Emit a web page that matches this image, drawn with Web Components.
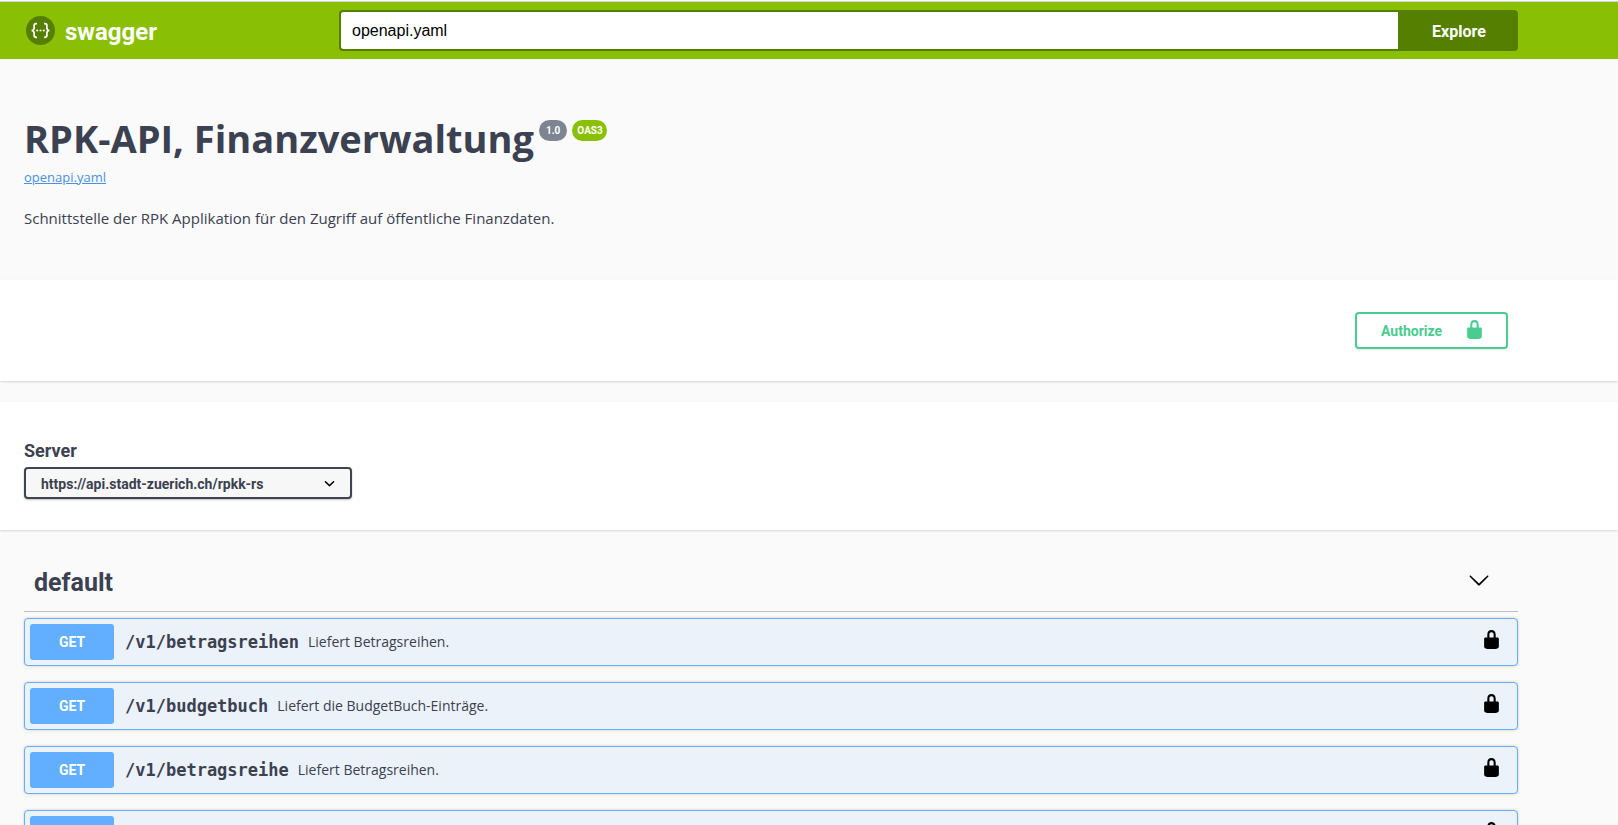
<!DOCTYPE html>
<html lang="de">
<head>
<meta charset="utf-8">
<title>Swagger UI</title>
<style>
  body { margin: 0; background: #fafafa; color: #3b4151; font-family: "Open Sans", "Noto Sans", sans-serif; overflow-x: hidden; }
</style>
</head>
<body>
<swagger-app></swagger-app>

<script>
const HEAD_FONT = 'font-family: Roboto, "Open Sans", sans-serif;';
const GUTTER = 'padding-left: 24px; padding-right: 100px; box-sizing: border-box;';

function define(name, html, setup) {
  const template = document.createElement('template');
  template.innerHTML = html;
  customElements.define(name, class extends HTMLElement {
    constructor() {
      super();
      this.attachShadow({ mode: 'open' }).append(template.content.cloneNode(true));
    }
    connectedCallback() { if (setup) setup(this, this.shadowRoot); }
  });
}

define('lock-icon', `
  <style>:host { display: block; width: 21px; height: 21px; } svg { display: block; }</style>
  <svg width="21" height="21" viewBox="0 0 20 20" fill="currentColor" aria-hidden="true"><path d="M15.8 8H14V5.6C14 2.703 12.665 1 10 1 7.334 1 6 2.703 6 5.6V8H4c-.553 0-1 .646-1 1.199V17c0 .549.428 1.139.951 1.307l1.197.387C5.672 18.861 6.55 19 7.1 19h5.8c.549 0 1.428-.139 1.951-.307l1.196-.387c.524-.167.953-.757.953-1.306V9.199C17 8.646 16.352 8 15.8 8zM12 8H8V5.199C8 3.754 8.797 3 10 3c1.203 0 2 .754 2 2.199V8z"/></svg>`);

define('top-bar', `
  <style>
    :host { display: block; background: #89bf04; border-top: 1px solid #d5d5da; }
    .inner { display: flex; align-items: center; padding-top: 8px; padding-bottom: 8px; ${GUTTER} }
    a { display: flex; align-items: center; gap: 10px; width: 315px; box-sizing: border-box; padding-left: 2px; color: #fff; text-decoration: none; font-size: 24px; line-height: 28px; font-weight: 700; ${HEAD_FONT} }
    a span { padding-top: 2px; }
    form { flex: 1; display: flex; height: 41px; }
    input { flex: 1; min-width: 0; box-sizing: border-box; border: 2px solid #547f00; border-right: 0; border-radius: 4px 0 0 4px; padding: 0 11px; font: 16px "Liberation Sans", Arial, sans-serif; color: #000; background: #fff; outline: none; }
    button { width: 120px; border: 0; border-radius: 0 4px 4px 0; padding: 2px 0 0 2px; background: #547f00; color: #fff; font-size: 16px; font-weight: 700; ${HEAD_FONT} }
  </style>
  <div class="inner">
    <a href="#"><svg width="29" height="29" viewBox="0 0 30 30" aria-hidden="true"><circle cx="15" cy="15" r="15" fill="#547f00"/><g fill="none" stroke="#fff" stroke-width="1.8"><path d="M11.3 8h-.9q-2 0-2 2v2.4q0 2.3-2.6 2.6q2.6.3 2.6 2.6v2.4q0 2 2 2h.9"/><path d="M18.7 8h.9q2 0 2 2v2.4q0 2.3 2.6 2.6q-2.6.3-2.6 2.6v2.4q0 2-2 2h-.9"/></g><g fill="#fff"><circle cx="11.6" cy="15" r="1.1"/><circle cx="15" cy="15" r="1.1"/><circle cx="18.4" cy="15" r="1.1"/></g></svg><span>swagger</span></a>
    <form><input type="text" value="openapi.yaml" aria-label="Explore URL"><button type="button">Explore</button></form>
  </div>`);

define('version-badge', `
  <style>
    :host { display: block; border-radius: 11px; background: #7d8492; color: #fff; padding: 1px 7px 0; font-size: 10px; line-height: 20px; font-weight: 700; ${HEAD_FONT} }
    :host([kind="oas"]) { background: #89bf04; padding: 1px 4px 0 5px; }
  </style><slot></slot>`);

define('api-info', `
  <style>
    :host { display: block; padding-top: 57px; padding-bottom: 50px; ${GUTTER} }
    header { display: flex; align-items: flex-start; gap: 5px; }
    h1 { margin: 0; font-size: 38px; line-height: 44px; font-weight: 700; }
    version-badge { margin-top: 4px; }
    a { display: block; width: max-content; margin-top: 8px; color: #4990e2; font-size: 13px; line-height: 18px; }
    p { margin: 20px 0 0; font-size: 15px; line-height: 24px; }
  </style>
  <header><h1>RPK-API, Finanzverwaltung</h1><version-badge>1.0</version-badge><version-badge kind="oas">OAS3</version-badge></header>
  <a href="#openapi.yaml">openapi.yaml</a>
  <p>Schnittstelle der RPK Applikation für den Zugriff auf öffentliche Finanzdaten.</p>`);

define('auth-bar', `
  <style>
    :host { display: flex; justify-content: flex-end; background: #fff; padding-top: 32px; padding-bottom: 32px; box-shadow: 0 1px 2px rgba(0,0,0,.15); ${GUTTER} }
    button { display: flex; align-items: center; justify-content: space-between; width: 153px; height: 37px; box-sizing: border-box; margin-right: 10px; padding: 0 21px 0 24px; border: 2px solid #49cc90; border-radius: 4px; background: #fff; color: #49cc90; box-shadow: 0 1px 2px rgba(0,0,0,.1); font-size: 14px; font-weight: 700; ${HEAD_FONT} }
    lock-icon { margin-bottom: 2px; }
  </style>
  <button type="button"><span>Authorize</span><lock-icon></lock-icon></button>`);

define('server-picker', `
  <style>
    :host { display: block; margin-top: 21px; background: #fff; padding-top: 38px; padding-bottom: 31px; box-shadow: 0 1px 2px rgba(0,0,0,.15); ${GUTTER} }
    label { display: block; font-size: 18px; line-height: 22px; font-weight: 700; margin-bottom: 5px; ${HEAD_FONT} }
    select { appearance: none; display: block; width: 328px; height: 32px; box-sizing: border-box; padding: 1px 40px 0 15px; border: 2px solid #41444e; border-radius: 4px; color: #3b4151; box-shadow: 0 1px 2px rgba(0,0,0,.25); font-size: 14px; font-weight: 700; ${HEAD_FONT}
      background: #f7f7f7 url('data:image/svg+xml,<svg xmlns="http://www.w3.org/2000/svg" viewBox="0 0 20 20"><path d="M13.418 7.859c.271-.268.709-.268.978 0 .27.268.272.701 0 .969l-3.908 3.83c-.27.268-.707.268-.979 0l-3.908-3.83c-.27-.267-.27-.701 0-.969.271-.268.709-.268.978 0L10 11l3.418-3.141z"/></svg>') no-repeat right 10px center / 21px; }
  </style>
  <label for="server">Server</label>
  <select id="server"><option>https://api.stadt-zuerich.ch/rpkk-rs</option></select>`);

define('api-operation', `
  <style>
    :host { display: flex; align-items: center; height: 48px; box-sizing: border-box; padding: 0 15px 0 5px; border: 1px solid #61affe; border-radius: 4px; background: #ebf2f9; box-shadow: 0 0 3px rgba(0,0,0,.19); }
    button { width: 84px; height: 36px; padding: 0; border: 0; border-radius: 3px; background: #61affe; color: #fff; font-size: 14px; font-weight: 700; ${HEAD_FONT} }
    a { margin: 0 9px 0 11px; color: inherit; text-decoration: none; font: 700 17px "DejaVu Sans Mono", monospace; }
    span { flex: 1; font-size: 14px; line-height: 20px; }
    lock-icon { color: #000; margin-bottom: 6px; }
  </style>
  <button type="button"></button><a href="#"></a><span><slot></slot></span><lock-icon></lock-icon>`,
  (host, root) => {
    root.querySelector('button').textContent = host.getAttribute('method');
    root.querySelector('a').textContent = host.getAttribute('path');
  });

define('api-tag', `
  <style>
    :host { display: block; padding-top: 31px; ${GUTTER} }
    h2 { display: flex; align-items: center; justify-content: space-between; margin: 0 0 6px; padding: 6px 28px 12px 10px; border-bottom: 1px solid #bebfc4; font-size: 25px; line-height: 32px; font-weight: 700; ${HEAD_FONT} }
    svg { display: block; margin-bottom: 6px; }
    .list { display: grid; gap: 16px; }
  </style>
  <h2><slot name="title"></slot><svg width="22" height="22" viewBox="0 0 20 20" aria-hidden="true"><path d="M17.418 6.109c.272-.268.709-.268.979 0s.271.701 0 .969l-7.908 7.83c-.27.268-.707.268-.979 0l-7.908-7.83c-.27-.268-.27-.701 0-.969.271-.268.709-.268.979 0L10 13.25l7.418-7.141z"/></svg></h2>
  <div class="list"><slot></slot></div>`);

define('swagger-app', `
  <style>:host { display: block; height: 100vh; box-sizing: border-box; padding-top: 1px; overflow: hidden; }</style>
  <top-bar></top-bar>
  <api-info></api-info>
  <auth-bar></auth-bar>
  <server-picker></server-picker>
  <api-tag>
    <span slot="title">default</span>
    <api-operation method="GET" path="/v1/betragsreihen">Liefert Betragsreihen.</api-operation>
    <api-operation method="GET" path="/v1/budgetbuch">Liefert die BudgetBuch-Einträge.</api-operation>
    <api-operation method="GET" path="/v1/betragsreihe">Liefert Betragsreihen.</api-operation>
    <api-operation></api-operation>
  </api-tag>`);
</script>
</body>
</html>
